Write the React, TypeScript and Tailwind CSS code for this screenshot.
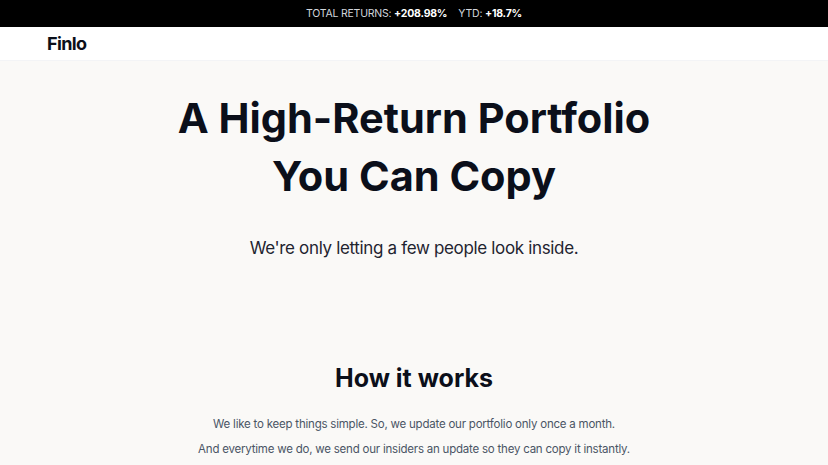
import React from 'react';

export default function App() {
  return (
    <div className="min-h-screen bg-[#faf9f7] text-[#0b0f1a]" style={{ fontFamily: 'Inter, "Liberation Sans", sans-serif' }}>
      {/* Top ticker */}
      <div className="h-[27px] bg-black flex items-center justify-center text-[10.5px] tracking-[-0.02em] text-gray-300">
        <span>TOTAL RETURNS: <b className="font-bold text-white">+208.98%</b></span>
        <span className="ml-[11px]">YTD: <b className="font-bold text-white">+18.7%</b></span>
      </div>

      {/* Nav */}
      <div className="h-[34px] bg-white border-b border-gray-100 flex items-center px-[47px]">
        <span className="text-[18px] font-bold tracking-[-0.035em]">Finlo</span>
      </div>

      {/* Hero */}
      <div className="flex flex-col items-center pt-[28px]">
        <h1 className="text-[41.5px] leading-[58px] font-bold text-center">
          A High-Return Portfolio
          <br />
          You Can Copy
        </h1>
        <p className="mt-[31px] text-[17px] leading-[24px] tracking-[-0.02em] text-[#1f2430]">
          We're only letting a few people look inside.
        </p>
      </div>

      {/* How it works */}
      <div className="flex flex-col items-center pt-[102px]">
        <h2 className="text-[25px] leading-[32px] font-bold">How it works</h2>
        <p className="mt-[18px] text-[11.5px] leading-[25px] tracking-[-0.019em] text-gray-600">
          We like to keep things simple. So, we update our portfolio only once a month.
        </p>
        <p className="text-[11.5px] leading-[25px] tracking-[-0.019em] text-gray-600">
          And everytime we do, we send our insiders an update so they can copy it instantly.
        </p>
      </div>
    </div>
  );
}
